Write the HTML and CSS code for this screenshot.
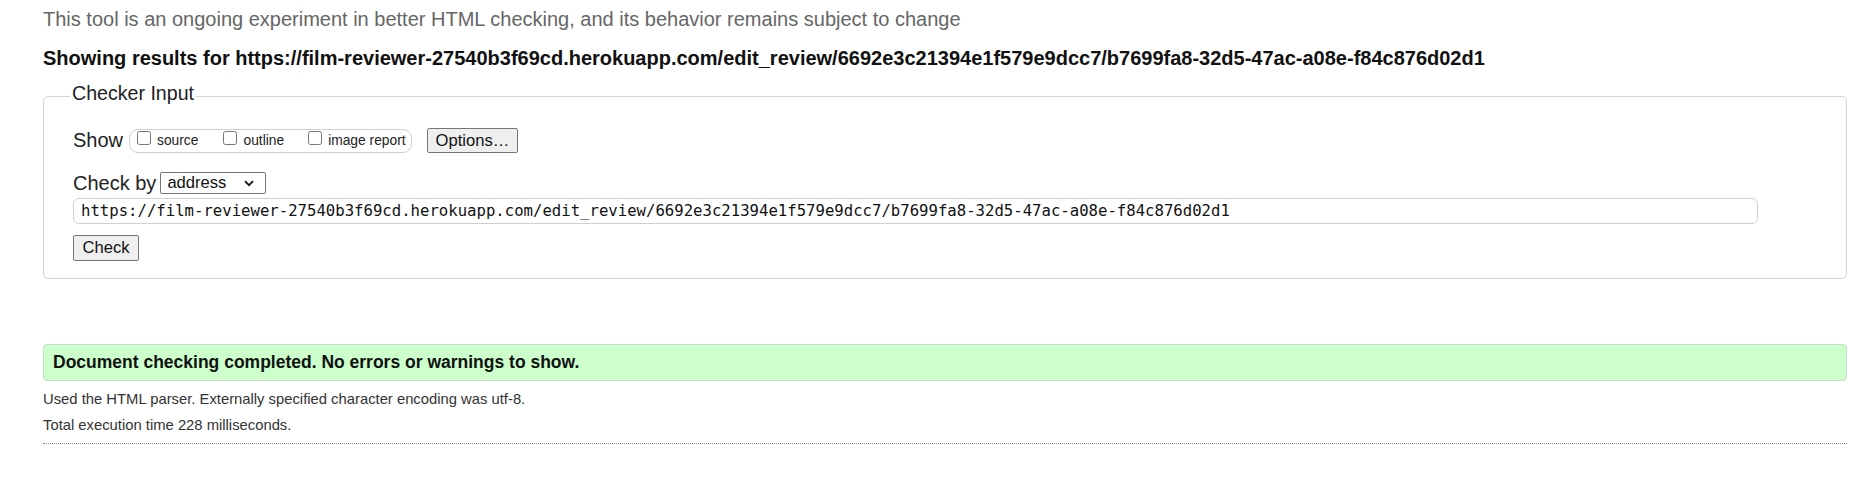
FILE: index.html
```html
<!DOCTYPE html>
<html lang="en">
<head>
<meta charset="utf-8">
<title>Nu Html Checker</title>
<link rel="stylesheet" href="styles.css">
</head>
<body>
<div class="page">
  <p class="intro">This tool is an ongoing experiment in better HTML checking, and its behavior remains subject to change</p>
  <p class="results-for">Showing results for https://film-reviewer-27540b3f69cd.herokuapp.com/edit_review/6692e3c21394e1f579e9dcc7/b7699fa8-32d5-47ac-a08e-f84c876d02d1</p>
  <fieldset class="checker">
    <legend class="checker-legend">Checker Input</legend>
    <div class="show-row">
      <span class="row-label">Show</span>
      <span class="show-box">
        <label class="opt opt-source"><input type="checkbox" class="cb">source</label>
        <label class="opt opt-outline"><input type="checkbox" class="cb">outline</label>
        <label class="opt"><input type="checkbox" class="cb">image report</label>
      </span>
      <button class="btn btn-options" type="button">Options…</button>
    </div>
    <div class="checkby-row">
      <span class="row-label">Check by</span>
      <span class="select">
        <span class="select-text">address</span>
        <svg class="chev" width="10" height="7" viewBox="0 0 10 7"><path d="M1 1.2 L5 5.2 L9 1.2" fill="none" stroke="#111" stroke-width="1.8"/></svg>
      </span>
    </div>
    <div class="url-input">https://film-reviewer-27540b3f69cd.herokuapp.com/edit_review/6692e3c21394e1f579e9dcc7/b7699fa8-32d5-47ac-a08e-f84c876d02d1</div>
    <div class="check-row">
      <button class="btn btn-check" type="button">Check</button>
    </div>
  </fieldset>
  <div class="success">Document checking completed. No errors or warnings to show.</div>
  <div class="details">
    <p class="detail">Used the HTML parser. Externally specified character encoding was utf-8.</p>
    <p class="detail">Total execution time 228 milliseconds.</p>
  </div>
  <hr class="dotted">
</div>
</body>
</html>
```
FILE: styles.css
```css
html, body {
  margin: 0;
  padding: 0;
  background: #fff;
}
body {
  font-family: "Liberation Sans", Arial, sans-serif;
  color: #222;
}
.page {
  margin: 0 14px 0 43px;
  padding-top: 7px;
}
.intro {
  margin: 0;
  font-size: 20px;
  line-height: 24px;
  color: #666;
}
.results-for {
  margin: 16px 0 15px;
  font-size: 20px;
  line-height: 22px;
  font-weight: bold;
  color: #111;
}
.checker {
  margin: 0;
  border: 1px solid #d2d2d2;
  border-radius: 5px;
  padding: 0 88px 17px 29px;
  min-width: 0;
}
.checker-legend {
  margin-left: -3px;
  padding: 0 2px 6px;
  font-size: 19.6px;
  line-height: 18px;
  color: #222;
}
.row-label {
  font-size: 20px;
  line-height: 21px;
  color: #222;
}
.show-row {
  margin-top: 20px;
  height: 25px;
  display: flex;
  align-items: center;
}
.show-row .row-label {
  margin-right: 6px;
}
.show-box {
  display: flex;
  align-items: baseline;
  height: 22px;
  border: 1px solid #cfcfcf;
  border-radius: 9px;
  padding: 0 5px 0 7px;
  font-size: 13.8px;
  line-height: 22px;
  color: #222;
}
.opt {
  display: inline-flex;
  align-items: baseline;
}
.opt-source {
  margin-right: 25px;
}
.opt-outline {
  margin-right: 24px;
}
.cb {
  width: 14px;
  height: 14px;
  margin: 0 6px 2px 0;
}
.btn {
  font-family: "Liberation Sans", Arial, sans-serif;
  font-size: 16.6px;
  color: #111;
  background: #efefef;
  border: 1px solid #767676;
  border-radius: 2px;
  padding: 0 8px;
  margin: 0;
}
.btn-options {
  height: 25px;
  margin-left: 15px;
  line-height: 23px;
}
.checkby-row {
  margin-top: 19px;
  height: 22px;
  display: flex;
  align-items: center;
}
.checkby-row .row-label {
  margin-right: 4px;
}
.select {
  box-sizing: border-box;
  width: 106px;
  height: 22px;
  border: 1px solid #767676;
  border-radius: 2px;
  display: flex;
  align-items: center;
  justify-content: space-between;
  padding: 0 11px 0 6px;
  font-size: 16.6px;
  color: #111;
}
.chev {
  display: block;
}
.url-input {
  box-sizing: border-box;
  margin-top: 4px;
  height: 26px;
  border: 1px solid #d0d0d0;
  border-radius: 6px;
  padding: 0 7px;
  font-family: "DejaVu Sans Mono", "Liberation Mono", monospace;
  font-size: 15.65px;
  line-height: 24px;
  color: #111;
  white-space: nowrap;
  overflow: hidden;
}
.check-row {
  margin-top: 11px;
  display: flex;
}
.btn-check {
  height: 26px;
  width: 66px;
  line-height: 24px;
}
.success {
  margin-top: 65px;
  box-sizing: border-box;
  height: 37px;
  border: 1px solid #c8dcc8;
  border-radius: 4px;
  background: #ccffcc;
  padding: 0 9px;
  font-size: 17.5px;
  line-height: 35px;
  font-weight: bold;
  color: #111;
}
.details {
  margin-top: 5px;
}
.detail {
  margin: 0;
  font-size: 14.8px;
  line-height: 26px;
  color: #333;
}
.dotted {
  margin: 5px 0 0;
  border: 0;
  border-top: 1px dotted #8a8a8a;
  height: 0;
}
```
